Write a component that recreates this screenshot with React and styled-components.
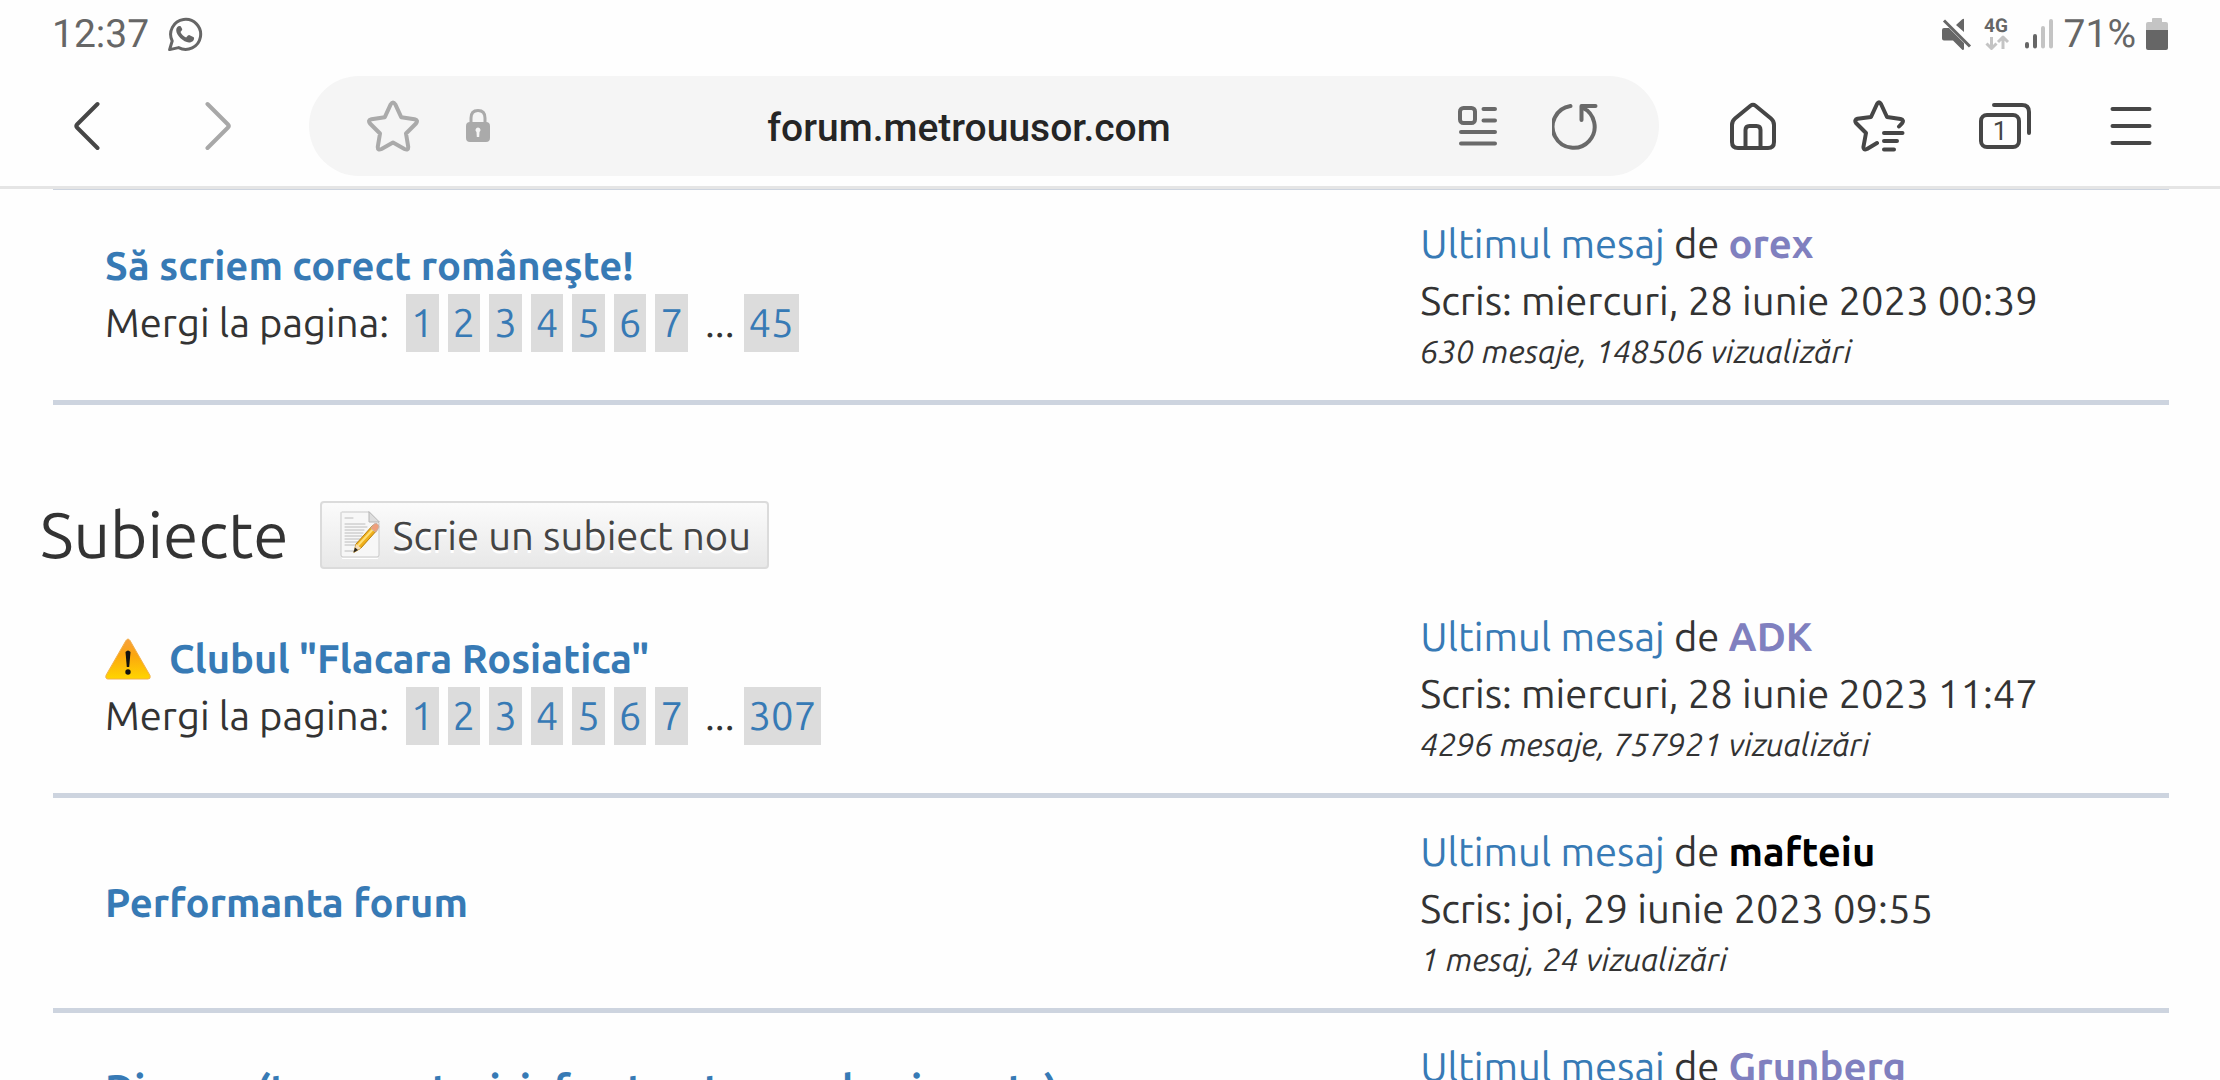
import React from 'react';
import styled, { createGlobalStyle } from 'styled-components';

const GlobalStyle = createGlobalStyle`
  * {
    box-sizing: border-box;
  }
  body {
    margin: 0;
    background: #fefefe;
    color: #333;
    font-family: Ubuntu, "Noto Sans", "Open Sans", sans-serif;
    font-size: 40px;
    line-height: 57px;
    text-rendering: geometricPrecision;
  }
`;

const Page = styled.div`
  height: 100vh;
  overflow: hidden;
`;

const StatusBar = styled.header`
  display: flex;
  justify-content: space-between;
  align-items: center;
  height: 68px;
  padding: 0 52px;
  color: #666;
  font-family: Roboto, sans-serif;
  font-size: 39px;
`;

const StatusGroup = styled.div`
  display: flex;
  align-items: center;
  gap: ${props => props.$gap}px;
`;

const Icon = styled.svg`
  display: block;
  flex: none;
  fill: none;
  stroke: currentColor;
  stroke-width: 4;
  stroke-linecap: round;
  stroke-linejoin: round;
  font-family: Roboto, sans-serif;
`;

const Toolbar = styled.nav`
  display: flex;
  align-items: center;
  padding: 8px 59px 10px 57px;
  border-bottom: 3px solid #e5e5e5;
`;

const IconButton = styled.button`
  display: flex;
  align-items: center;
  justify-content: center;
  flex: none;
  width: 60px;
  height: 60px;
  padding: 0;
  border: 0;
  background: none;
  color: ${props => props.$color || '#464646'};
`;

const ButtonGroup = styled.div`
  display: flex;
  gap: ${props => props.$gap}px;
`;

const AddressBar = styled.div`
  display: flex;
  align-items: center;
  flex: 1;
  height: 100px;
  margin: 0 64px 0 61px;
  padding: 0 54px;
  border-radius: 50px;
  background: #f5f5f5;
`;

const LockIcon = styled(Icon)`
  margin-left: 43px;
  color: #aaa;
`;

const Address = styled.input`
  flex: 1;
  min-width: 0;
  padding: 4px 0 0;
  border: 0;
  background: none;
  color: #252525;
  font-family: Roboto, sans-serif;
  font-size: 39px;
  font-weight: 500;
  text-align: center;
`;

const Content = styled.main`
  padding: 0 40px;
`;

const TopicTable = styled.table`
  width: calc(100% - 24px);
  margin: 0 11px 0 13px;
  border-spacing: 0;
  table-layout: fixed;
`;

const TopicRow = styled.tr`
  td {
    border-bottom: 5px solid #cdd4df;
  }
`;

const TitleCell = styled.td`
  width: 64%;
  padding: 0 0 1px 52px;
  vertical-align: middle;
`;

const LastCell = styled.td`
  padding: 25px 0 25px 13px;
`;

/* what is left of the rule above the first visible topic */
const TopRule = styled.hr`
  height: 1px;
  margin: 0 11px 0 13px;
  border: 0;
  background: #cdd4df;
`;

const TopicLink = styled.a`
  color: #377ab5;
  font-weight: bold;
  text-decoration: none;
`;

const TitleLine = styled.div`
  display: flex;
  align-items: center;
  gap: 18px;
`;

const Pages = styled.div`
  display: flex;
  gap: 9px;
  line-height: 58px;
`;

const PagesLabel = styled.span`
  margin-right: 8px;
`;

const Dots = styled.span`
  margin-left: 8px;
`;

const PageLink = styled.a`
  padding: 0 5px;
  background: #dcdcdc;
  color: #377ab5;
  text-decoration: none;
`;

const Line = styled.div`
  white-space: nowrap;
`;

const MessageLink = styled.a`
  color: #377ab5;
  text-decoration: none;
`;

const Author = styled.a`
  color: ${props => (props.$guest ? '#000' : '#8080bf')};
  font-weight: bold;
  text-decoration: none;
`;

const Stats = styled.div`
  font-size: 32px;
  line-height: 46px;
  font-style: italic;
`;

const SectionHead = styled.div`
  display: flex;
  align-items: center;
  gap: 31px;
  padding: 96px 0 14px;
`;

const SectionTitle = styled.h2`
  margin: 0;
  font-size: 64px;
  font-weight: normal;
`;

const NewTopic = styled.button`
  display: flex;
  align-items: center;
  gap: 11px;
  height: 68px;
  padding: 0 16px 0 18px;
  border: 2px solid #dbdbdb;
  border-radius: 4px;
  background: linear-gradient(#fbfbfb, #e8e8e8);
  color: #444;
  font: inherit;
  text-rendering: inherit;
  text-shadow: 0 3px 0 #fff;
`;

const WhatsAppIcon = () => (
  <Icon width="35" height="35" viewBox="0 0 35 35">
    <path style={{ strokeWidth: 3 }} d="M1.6 32.6l2.6-8.6A15 15 0 1 1 10.6 30.6z" />
    <path fill="currentColor" stroke="none" d="M11.6 9c-2 0-3.4 2-3.4 4.2C8.2 18 15.5 25.4 21 25.4c2.5 0 5-1.6 5.1-4l-.3-1.1-4.7-2.2-1.2.3-1.8 2.2c-2.5-1-4.6-3-5.6-5.5l1.6-2 .1-1.1-1.5-2.7z" />
  </Icon>
);

const MuteIcon = () => (
  <Icon width="30" height="33" viewBox="0 0 30 33">
    <path fill="currentColor" stroke="none" d="M2 10h5l15 15v6.500l-1.500.5L11 22.500H2q-2 0-2-2V12q0-2 2-2zM20 1.500q2-1.500 2 0V14l-8-7z" />
    <path style={{ strokeWidth: 3, strokeLinecap: 'butt' }} d="M2 2.500l26 26" />
  </Icon>
);

const NetworkIcon = () => (
  <Icon width="30" height="34" viewBox="0 0 30 34">
    <text x="2" y="15" fontSize="19" fontWeight="700" fill="currentColor" stroke="none">4G</text>
    <path stroke="#c4c4c4" style={{ strokeWidth: 3, strokeLinecap: 'butt' }} d="M9.500 20v11M4.500 26.500l5 5 5-5M21 32V21M16 25l5-5 5 5" />
  </Icon>
);

const SignalIcon = () => (
  <Icon width="32" height="31" viewBox="0 0 32 31">
    <path d="M5 25v2.500M13 17v10.500" />
    <path stroke="#c4c4c4" d="M21 9v18.500M29 2v25.500" />
  </Icon>
);

const BatteryIcon = () => (
  <Icon width="22" height="34" viewBox="0 0 22 34">
    <path fill="#c4c4c4" stroke="none" d="M7 1h8q1 0 1 1v3h4q2 0 2 2v8H0V7q0-2 2-2h4V2q0-1 1-1z" />
    <path fill="currentColor" stroke="none" d="M0 13h22v18q0 2-2 2H2q-2 0-2-2z" />
  </Icon>
);

const BackIcon = () => (
  <Icon width="26" height="50" viewBox="0 0 26 50">
    <path d="M23.500 3L3 23.500q-1.500 1.500 0 3L23.500 47" />
  </Icon>
);

const ForwardIcon = () => (
  <Icon width="26" height="50" viewBox="0 0 26 50">
    <path d="M2.500 3L23 23.500q1.500 1.500 0 3L2.500 47" />
  </Icon>
);

const StarIcon = () => (
  <Icon width="52" height="52" viewBox="0 0 52 52">
    <path d="M23.800 4.200q2.200-3.600 4.400 0l6 13 13.300 2q4 1 1.500 4.300L39 33.500l2.200 13.200q.3 4.200-3.700 2.300L26 42.500 14.500 49q-4 1.900-3.700-2.300L13 33.500 3 23.500q-2.500-3.300 1.500-4.300l13.300-2z" />
  </Icon>
);

const ReaderIcon = () => (
  <Icon width="40" height="42" viewBox="0 0 40 42">
    <rect x="2" y="3" width="15" height="15" rx="3.500" />
    <path d="M25.500 4H37M25.500 15.500H37M3 27h34M3 38.500h34" />
  </Icon>
);

const ReloadIcon = () => (
  <Icon width="46" height="48" viewBox="0 0 46 48">
    <path d="M18.500 4A21 21 0 1 0 30 5.500" />
    <path d="M29.500 18V4H43.500" />
  </Icon>
);

const HomeIcon = () => (
  <Icon width="46" height="48" viewBox="0 0 46 48">
    <path d="M20.500 3.800q2.500-2 5 0L41 16.500q3 2.500 3 6.500v17q0 6-6 6H8q-6 0-6-6V23q0-4 3-6.500z" />
    <path d="M15.500 46V28q0-4 4-4h7q4 0 4 4v18" />
  </Icon>
);

const BookmarksIcon = () => (
  <Icon width="52" height="52" viewBox="0 0 52 52">
    <path d="M24 43l-10 6q-4 1.500-3.500-2.500L13 33 3 23q-2-3.300 1.500-4.200L18 17l6-13q2-3.500 4 0l6 13 13.500 2q4 1 1.500 4.300L46 26.500" />
    <path d="M31 33h18.500M31 41h13M31 49.500h10" />
  </Icon>
);

const TabsIcon = () => (
  <Icon width="52" height="48" viewBox="0 0 52 48">
    <rect x="2" y="13" width="38" height="32" rx="6" />
    <path d="M15 3h28q7 0 7 7v21" />
    <text x="21" y="38" fontSize="26" textAnchor="middle" fill="currentColor" stroke="none">1</text>
  </Icon>
);

const MenuIcon = () => (
  <Icon width="42" height="42" viewBox="0 0 42 42">
    <path d="M2.500 4h37M2.500 21h37M2.500 38h37" />
  </Icon>
);

const WarningIcon = () => (
  <Icon width="46" height="42" viewBox="0 0 46 42">
    <defs>
      <linearGradient id="warning" x1="0" y1="0" x2="0" y2="1">
        <stop offset="0" stopColor="#f7a03c" />
        <stop offset="0.4" stopColor="#fba60f" />
        <stop offset="1" stopColor="#ffd500" />
      </linearGradient>
    </defs>
    <path fill="url(#warning)" stroke="#f3b04b" style={{ strokeWidth: 1 }} d="M21 2.500q2-3 4 0l20 35q1 3.500-2 3.500H3q-3 0-2-3.500z" />
    <path fill="#111" stroke="none" d="M20.500 14q2.500-3 5 0l-1.300 15h-2.400z" />
    <circle cx="23" cy="34" r="2.700" fill="#111" stroke="none" />
  </Icon>
);

const WriteIcon = () => (
  <Icon width="42" height="48" viewBox="0 0 42 48">
    <path d="M3 47.500h34" stroke="#fff" style={{ strokeWidth: 2 }} />
    <path d="M2 1h27l10 11v32q0 2-2 2H3q-2 0-2-2V2z" fill="#f7f7f7" stroke="#c9c9c9" style={{ strokeWidth: 1 }} />
    <path d="M29 1v10h10z" fill="#ddd" stroke="#b5b5b5" style={{ strokeWidth: 1 }} />
    <path d="M5 7h8M5 13h20M5 16h22M5 19h19M5 22h18M5 25h17M5 28h15M5 31h13M5 34h10M5 40h9" stroke="#bcbcbc" style={{ strokeWidth: 1 }} />
    <path d="M14 41l2-8 17-19 5 4-17 19z" fill="#f0b01a" stroke="#b8800f" style={{ strokeWidth: 1 }} />
    <path d="M17.500 35L35 16" stroke="#ffdf76" style={{ strokeWidth: 2 }} />
    <path d="M31 17l3-4q4-2 5 3l-3 5z" fill="#ef9f7c" stroke="#c9b0a4" style={{ strokeWidth: 1 }} />
    <path d="M14 41l2-8 5 4z" fill="#f5dcb4" stroke="none" />
    <path d="M13.500 41.500l1.500-5 3 2.500z" fill="#222" stroke="none" />
  </Icon>
);

const topics = [
  {
    title: 'Să scriem corect româneşte!',
    lastPage: 45,
    author: 'orex',
    date: 'miercuri, 28 iunie 2023 00:39',
    stats: '630 mesaje, 148506 vizualizări'
  },
  {
    title: 'Clubul "Flacara Rosiatica"',
    warning: true,
    lastPage: 307,
    author: 'ADK',
    date: 'miercuri, 28 iunie 2023 11:47',
    stats: '4296 mesaje, 757921 vizualizări'
  },
  {
    title: 'Performanta forum',
    author: 'mafteiu',
    guest: true,
    date: 'joi, 29 iunie 2023 09:55',
    stats: '1 mesaj, 24 vizualizări'
  },
  {
    title: 'Diverse (transporturi, infrastructura, urbanism etc)',
    lastPage: 58,
    author: 'Grunberg',
    date: 'joi, 29 iunie 2023 09:12',
    stats: '812 mesaje, 96410 vizualizări'
  }
];

const Topic = ({ topic }) => (
  <TopicRow>
    <TitleCell>
      <TitleLine>
        {topic.warning && <WarningIcon />}
        <TopicLink href="#topic">{topic.title}</TopicLink>
      </TitleLine>
      {topic.lastPage && (
        <Pages>
          <PagesLabel>Mergi la pagina:</PagesLabel>
          {[1, 2, 3, 4, 5, 6, 7].map(n => <PageLink href="#page" key={n}>{n}</PageLink>)}
          <Dots>...</Dots>
          <PageLink href="#page">{topic.lastPage}</PageLink>
        </Pages>
      )}
    </TitleCell>
    <LastCell>
      <Line>
        <MessageLink href="#last">Ultimul mesaj</MessageLink> de <Author href="#user" $guest={topic.guest}>{topic.author}</Author>
      </Line>
      <Line>Scris: {topic.date}</Line>
      <Stats>{topic.stats}</Stats>
    </LastCell>
  </TopicRow>
);

const TopicList = ({ items }) => (
  <TopicTable>
    <tbody>
      {items.map(topic => <Topic topic={topic} key={topic.title} />)}
    </tbody>
  </TopicTable>
);

const App = () => (
  <Page>
    <GlobalStyle />
    <StatusBar>
      <StatusGroup $gap={19}>
        <span>12:37</span>
        <WhatsAppIcon />
      </StatusGroup>
      <StatusGroup $gap={10}>
        <MuteIcon />
        <NetworkIcon />
        <SignalIcon />
        <span>71%</span>
        <BatteryIcon />
      </StatusGroup>
    </StatusBar>
    <Toolbar>
      <ButtonGroup $gap={71}>
        <IconButton type="button" aria-label="Înapoi"><BackIcon /></IconButton>
        <IconButton type="button" aria-label="Înainte" $color="#a8a8a8"><ForwardIcon /></IconButton>
      </ButtonGroup>
      <AddressBar>
        <IconButton type="button" aria-label="Adaugă la favorite" $color="#aaa"><StarIcon /></IconButton>
        <LockIcon width="24" height="34" viewBox="0 0 24 34">
          <path style={{ strokeWidth: 3 }} d="M5 15V9q0-7.500 7-7.500T19 9v6" />
          <path fillRule="evenodd" fill="currentColor" stroke="none" d="M4 13h16q4 0 4 4v12q0 4-4 4H4q-4 0-4-4V17q0-4 4-4zM12 18.500a2.500 2.500 0 0 0-1.500 4.500l.3 5h2.400l.3-5A2.500 2.500 0 0 0 12 18.500z" />
        </LockIcon>
        <Address type="text" aria-label="Adresa" defaultValue="forum.metrouusor.com" />
        <ButtonGroup $gap={37}>
          <IconButton type="button" aria-label="Mod citire" $color="#696969"><ReaderIcon /></IconButton>
          <IconButton type="button" aria-label="Reîncarcă" $color="#696969"><ReloadIcon /></IconButton>
        </ButtonGroup>
      </AddressBar>
      <ButtonGroup $gap={66}>
        <IconButton type="button" aria-label="Acasă"><HomeIcon /></IconButton>
        <IconButton type="button" aria-label="Marcaje"><BookmarksIcon /></IconButton>
        <IconButton type="button" aria-label="File"><TabsIcon /></IconButton>
        <IconButton type="button" aria-label="Meniu"><MenuIcon /></IconButton>
      </ButtonGroup>
    </Toolbar>
    <Content>
      <TopRule />
      <TopicList items={topics.slice(0, 1)} />
      <SectionHead>
        <SectionTitle>Subiecte</SectionTitle>
        <NewTopic type="button">
          <WriteIcon />
          Scrie un subiect nou
        </NewTopic>
      </SectionHead>
      <TopicList items={topics.slice(1)} />
    </Content>
  </Page>
);

export default App;
